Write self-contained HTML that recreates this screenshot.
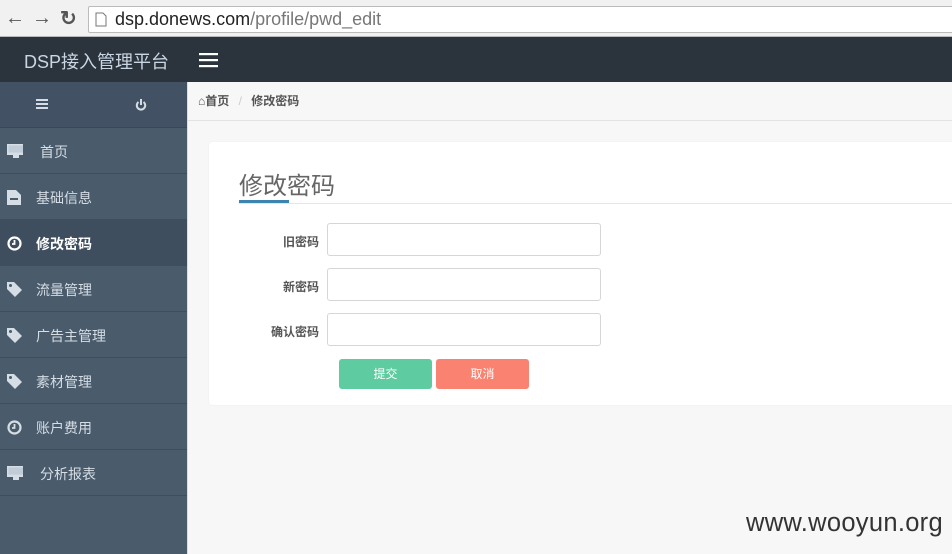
<!DOCTYPE html>
<html><head><meta charset="utf-8"><style>
*{margin:0;padding:0;box-sizing:border-box}
body{width:952px;height:554px;overflow:hidden;background:#f7f7f7;font-family:"Liberation Sans","Noto Sans CJK SC",sans-serif;position:relative}
.chrome{position:absolute;left:0;top:0;width:952px;height:37px;background:#f1f1f1;border-bottom:1px solid #b8b8b8}
.url{position:absolute;left:88px;top:6px;width:870px;height:27px;background:#fff;border:1px solid #bbb;border-radius:2px;font-size:18px;line-height:25px;padding-left:26px;color:#222}
.url span{color:#777}
.nav{position:absolute;left:0;top:37px;width:952px;height:45px;background:#2b333d}
.brand{position:absolute;left:24px;top:11px;color:#c9d6e3;font-size:18px}
.side{position:absolute;left:0;top:82px;width:188px;height:472px;background:#4a5b6c;border-right:1px solid #ddd}
.sidetop{height:46px;background:#425264;border-bottom:1px solid #3a4858;position:relative}
.item{height:46px;border-bottom:1px solid #3f4e5e;position:relative;color:#d5dde5;font-size:14px;line-height:48px;padding-left:36px}
.item.act{background:#3f4e5e;color:#fff;font-weight:bold}
.ic{position:absolute;left:7px;top:16px;width:16px;height:15px}
.bc{position:absolute;left:188px;top:82px;width:764px;height:39px;border-bottom:1px solid #e3e3e3;font-size:12px;color:#555;line-height:39px;padding-left:10px;font-weight:bold}
.card{position:absolute;left:209px;top:142px;width:760px;height:263px;background:#fff;border-radius:3px;box-shadow:0 0 1px #ddd}
h2{position:absolute;left:30px;top:24px;font-size:24px;font-weight:normal;color:#666}
.line{position:absolute;left:30px;top:61px;width:740px;height:1px;background:#e6e6e6}
.bl{position:absolute;left:30px;top:58px;width:50px;height:3px;background:#3d85b0}
.lbl{position:absolute;width:110px;text-align:right;font-size:12px;font-weight:bold;color:#555}
.in{position:absolute;left:118px;width:274px;height:33px;border:1px solid #d6d6d6;border-radius:3px;background:#fff}
.btn{position:absolute;top:217px;width:93px;height:30px;border-radius:3px;color:#fff;font-size:12px;text-align:center;line-height:30px}
.wm{position:absolute;left:746px;top:509px;font-size:25.5px;color:#333;letter-spacing:.3px}
</style></head><body>
<div class="chrome">
<div style="position:absolute;left:5px;top:7px;font-size:20px;color:#555;font-weight:bold">&#8592;</div>
<div style="position:absolute;left:32px;top:7px;font-size:20px;color:#555;font-weight:bold">&#8594;</div>
<div style="position:absolute;left:60px;top:6px;font-size:20px;color:#555;font-weight:bold">&#8635;</div>
<div class="url"><svg style="position:absolute;left:6px;top:5px" width="12" height="15"><path d="M1 1h7l3 3v10H1z" fill="none" stroke="#777"/></svg>dsp.donews.com<span>/profile/pwd_edit</span></div>
</div>
<div class="nav"><div class="brand">DSP接入管理平台</div>
<svg style="position:absolute;left:199px;top:16px" width="19" height="15"><rect y="0" width="19" height="2.2" fill="#fff"/><rect y="6" width="19" height="2.2" fill="#fff"/><rect y="12" width="19" height="2.2" fill="#fff"/></svg></div>
<div class="side">
<div class="sidetop"><svg style="position:absolute;left:36px;top:17px" width="12" height="10"><rect width="12" height="2" fill="#d5dde5"/><rect y="4" width="12" height="2" fill="#d5dde5"/><rect y="8" width="12" height="2" fill="#d5dde5"/></svg>
<svg style="position:absolute;left:135px;top:17px" width="12" height="12"><path d="M3.5 3A4.2 4.2 0 1 0 8.5 3" fill="none" stroke="#d5dde5" stroke-width="2"/><rect x="5" y="0" width="2" height="6" fill="#d5dde5"/></svg></div>
<div class="item" style="padding-left:40px"><svg class="ic" width="18" height="15"><rect x="0" y="0" width="18" height="11" fill="#d5dde5"/><rect x="1.5" y="1.5" width="15" height="7" fill="#c0ccd8"/><rect x="6" y="11" width="6" height="3" fill="#d5dde5"/></svg>首页</div>
<div class="item"><svg class="ic" width="14" height="16"><path d="M0 0h9l5 5v11H0z" fill="#d5dde5"/><rect x="3" y="8" width="8" height="2" fill="#4a5b6c"/></svg>基础信息</div>
<div class="item act"><svg class="ic" width="15" height="15"><circle cx="7.5" cy="7.5" r="6" fill="none" stroke="#fff" stroke-width="2.2"/><path d="M7.5 4v4H5" fill="none" stroke="#fff" stroke-width="1.8"/></svg>修改密码</div>
<div class="item"><svg class="ic" width="15" height="15"><path d="M0 0h7l8 8-7 7-8-8z" fill="#d5dde5"/><circle cx="3.5" cy="3.5" r="1.5" fill="#4a5b6c"/></svg>流量管理</div>
<div class="item"><svg class="ic" width="15" height="15"><path d="M0 0h7l8 8-7 7-8-8z" fill="#d5dde5"/><circle cx="3.5" cy="3.5" r="1.5" fill="#4a5b6c"/></svg>广告主管理</div>
<div class="item"><svg class="ic" width="15" height="15"><path d="M0 0h7l8 8-7 7-8-8z" fill="#d5dde5"/><circle cx="3.5" cy="3.5" r="1.5" fill="#4a5b6c"/></svg>素材管理</div>
<div class="item"><svg class="ic" width="15" height="15"><circle cx="7.5" cy="7.5" r="6" fill="none" stroke="#d5dde5" stroke-width="2.2"/><path d="M7.5 4v4H5" fill="none" stroke="#d5dde5" stroke-width="1.8"/></svg>账户费用</div>
<div class="item" style="padding-left:40px"><svg class="ic" width="18" height="15"><rect x="0" y="0" width="18" height="11" fill="#d5dde5"/><rect x="1.5" y="1.5" width="15" height="7" fill="#c0ccd8"/><rect x="6" y="11" width="6" height="3" fill="#d5dde5"/></svg>分析报表</div>
</div>
<div class="bc">&#8962;首页 <span style="color:#ccc;font-weight:normal;margin:0 6px">/</span> 修改密码</div>
<div class="card">
<h2>修改密码</h2><div class="line"></div><div class="bl"></div>
<div class="lbl" style="top:91px">旧密码</div><div class="in" style="top:81px"></div>
<div class="lbl" style="top:136px">新密码</div><div class="in" style="top:126px"></div>
<div class="lbl" style="top:181px">确认密码</div><div class="in" style="top:171px"></div>
<div class="btn" style="left:130px;background:#5ecba1">提交</div>
<div class="btn" style="left:227px;background:#fa8270">取消</div>
</div>
<div class="wm">www.wooyun.org</div>
</body></html>
